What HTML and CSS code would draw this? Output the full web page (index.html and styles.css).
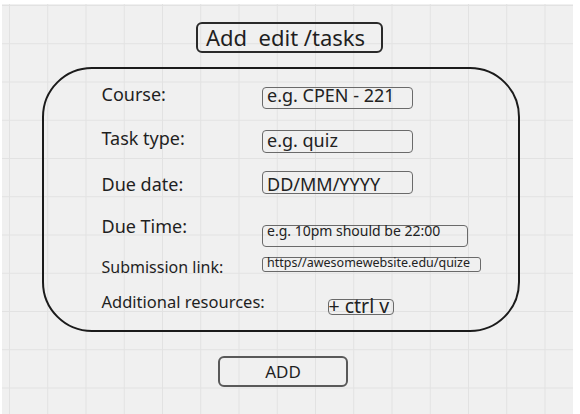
FILE: index.html
```html
<!DOCTYPE html>
<html lang="en">
<head>
<meta charset="utf-8">
<title>Add edit /tasks</title>
<link rel="stylesheet" href="styles.css">
</head>
<body>
<div class="canvas">
  <h1 class="title">Add  edit /tasks</h1>
  <form class="card">
    <div class="row row-course">
      <span class="label">Course:</span>
      <span class="field f-course">e.g. CPEN - 221</span>
    </div>
    <div class="row row-type">
      <span class="label">Task type:</span>
      <span class="field f-type">e.g. quiz</span>
    </div>
    <div class="row row-date">
      <span class="label">Due date:</span>
      <span class="field f-date">DD/MM/YYYY</span>
    </div>
    <div class="row row-time">
      <span class="label">Due Time:</span>
      <span class="field f-time">e.g. 10pm should be 22:00</span>
    </div>
    <div class="row row-link">
      <span class="label small">Submission link:</span>
      <span class="field f-link">https//awesomewebsite.edu/quize</span>
    </div>
    <div class="row row-res">
      <span class="label small res">Additional resources:</span>
      <span class="field f-res">+ ctrl v</span>
    </div>
  </form>
  <button class="add" type="button">ADD</button>
</div>
</body>
</html>
```
FILE: styles.css
```css
html, body {
  margin: 0;
  padding: 0;
  background: #ffffff;
}

body {
  font-family: "Noto Sans", "Open Sans", sans-serif;
  color: #1f1f1f;
}

.canvas {
  box-sizing: border-box;
  width: 571px;
  height: 410px;
  margin: 4px 0 0 2px;
  padding-top: 18px;
  background-color: #f0f0f0;
  background-image:
    linear-gradient(to right, #e2e2e2 1px, transparent 1px),
    linear-gradient(to bottom, #e2e2e2 1px, transparent 1px);
  background-size: 38.25px 38.25px;
  background-position: 7px 1px;
  display: flex;
  flex-direction: column;
  align-items: flex-start;
}

.title {
  box-sizing: border-box;
  margin: 0 0 0 194px;
  width: 187px;
  height: 31px;
  padding: 0 0 0 8px;
  border: 2px solid #2a2a2a;
  border-radius: 6px;
  font-size: 22px;
  font-weight: 400;
  line-height: 27px;
  white-space: pre;
  color: #1f1f1f;
}

.card {
  box-sizing: border-box;
  margin: 14px 0 0 40px;
  width: 478px;
  height: 265px;
  padding: 12.5px 0 0 57.5px;
  border: 2.5px solid #1b1b1b;
  border-radius: 50px;
  display: flex;
  flex-direction: column;
}

.row {
  display: grid;
  grid-template-columns: 160px auto;
  align-items: start;
  justify-items: start;
}

.row-course { height: 44px; }
.row-type { height: 46px; }
.row-date { height: 42px; }
.row-time { height: 43px; }
.row-link { height: 35px; }
.row-res { height: 24px; }

.label {
  font-size: 18px;
  line-height: 24px;
  white-space: nowrap;
}

.label.small {
  font-size: 16px;
  line-height: 20px;
}

.label.res {
  font-size: 16.5px;
}

.field {
  box-sizing: border-box;
  display: block;
  border: 1.5px solid #6a6a6a;
  border-radius: 4px;
  padding: 0 0 0 4.5px;
  white-space: nowrap;
  color: #222222;
  overflow: visible;
}

.f-course {
  margin-top: 5px;
  width: 151px;
  height: 22px;
  font-size: 18px;
  line-height: 14px;
}

.f-type {
  margin-top: 4px;
  width: 151px;
  height: 23px;
  font-size: 18px;
  line-height: 18px;
}

.f-date {
  margin-top: -1px;
  width: 151px;
  height: 23px;
  font-size: 18px;
  line-height: 24px;
}

.f-time {
  margin-top: 11px;
  width: 206px;
  height: 22px;
  font-size: 14px;
  line-height: 10px;
}

.f-link {
  margin-top: 0;
  width: 219px;
  height: 15px;
  font-size: 12.5px;
  line-height: 9.5px;
  border-radius: 3px;
}

.f-res {
  margin: 7px 0 0 66px;
  width: 66px;
  height: 16px;
  padding-left: 0;
  font-size: 19.5px;
  line-height: 11px;
}

.add {
  box-sizing: border-box;
  margin: 24px 0 0 216px;
  width: 130px;
  height: 31px;
  padding: 0;
  border: 2px solid #595959;
  border-radius: 6px;
  background: transparent;
  font-family: "Noto Sans", "Open Sans", sans-serif;
  font-size: 17px;
  line-height: 27px;
  color: #1f1f1f;
}
```
